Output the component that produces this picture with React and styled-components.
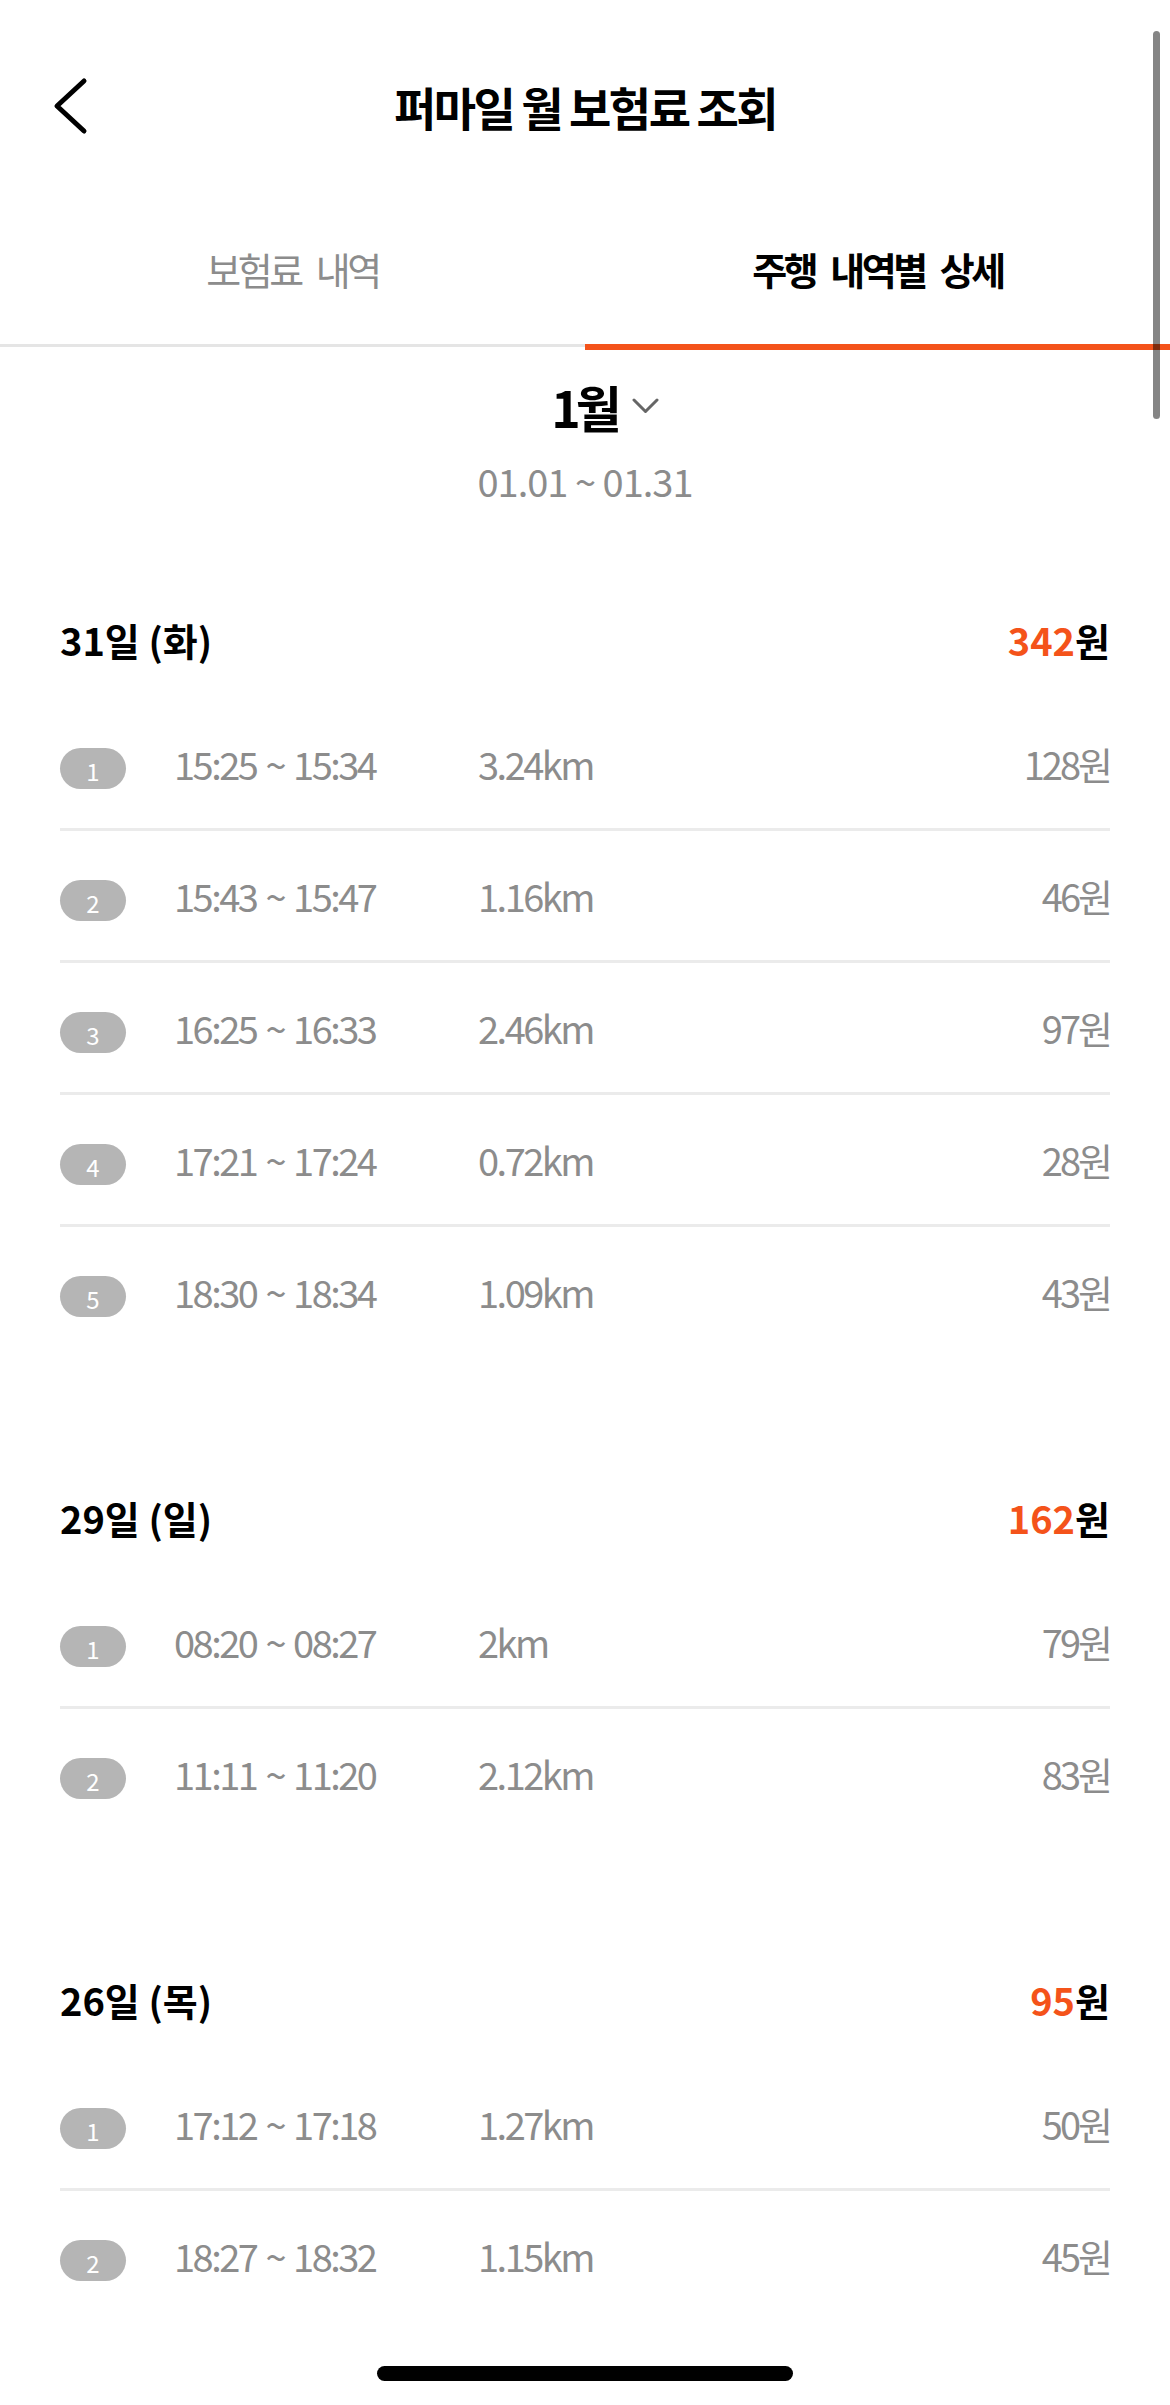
import React from "react";
import styled, { createGlobalStyle } from "styled-components";

const GlobalStyle = createGlobalStyle`
  body {
    margin: 0;
    background: #ffffff;
    font-family: "Noto Sans CJK KR", "Noto Sans", sans-serif;
  }
`;

const ORANGE = "#f4531a";
const GRAY = "#8c8c8c";

const Page = styled.div`
  position: relative;
  width: 1170px;
  min-height: 2405px;
  padding-top: 40px;
  box-sizing: border-box;
  background: #fff;
  overflow: hidden;
`;

const NavBar = styled.header`
  display: grid;
  grid-template-columns: 1fr auto 1fr;
  align-items: center;
  height: 132px;
`;

const BackButton = styled.button`
  justify-self: start;
  display: flex;
  align-items: center;
  margin-left: 52px;
  padding: 0;
  border: none;
  background: none;
  cursor: pointer;
`;

const Title = styled.h1`
  margin: 0;
  font-size: 46px;
  font-weight: 700;
  letter-spacing: -2.5px;
  color: #000;
`;

const Tabs = styled.nav`
  display: flex;
  align-items: flex-start;
`;

const Tab = styled.div`
  flex: 1;
  display: flex;
  align-items: center;
  justify-content: center;
  height: 152px;
  padding-top: 20px;
  font-size: 38px;
  letter-spacing: -3.5px;
  word-spacing: 10px;
  font-weight: ${(p) => (p.$active ? 700 : 400)};
  color: ${(p) => (p.$active ? "#000" : GRAY)};
  border-bottom: ${(p) => (p.$active ? `6px solid ${ORANGE}` : "3px solid #e5e5e5")};
`;

const MonthPicker = styled.section`
  display: flex;
  flex-direction: column;
  align-items: center;
`;

const MonthRow = styled.div`
  display: flex;
  align-items: center;
  gap: 15px;
  margin-top: 26px;
  height: 60px;
  padding-left: 40px;
`;

const Month = styled.span`
  font-size: 50px;
  font-weight: 700;
  letter-spacing: -5px;
  line-height: 60px;
  color: #000;
`;

const Range = styled.div`
  margin-top: 22px;
  font-size: 38px;
  letter-spacing: -1px;
  line-height: 46px;
  color: ${GRAY};
`;

const DaySection = styled.section`
  padding: 0 60px;
  margin-top: ${(p) => (p.$first ? 75 : 98)}px;
`;

const DayHeader = styled.div`
  display: flex;
  align-items: center;
  justify-content: space-between;
  height: 120px;
  font-size: 38px;
  font-weight: 700;
  color: #000;
`;

const Total = styled.span`
  em {
    font-style: normal;
    color: ${ORANGE};
  }
`;

const Trip = styled.div`
  display: flex;
  align-items: center;
  height: 129px;
  border-bottom: 3px solid ${(p) => (p.$last ? "transparent" : "#ebebeb")};
  font-size: 38px;
  letter-spacing: -2.5px;
  word-spacing: 3px;
  color: ${GRAY};
`;

const Badge = styled.span`
  display: flex;
  align-items: center;
  justify-content: center;
  width: 66px;
  height: 41px;
  padding-top: 4px;
  box-sizing: border-box;
  margin-top: 10px;
  margin-right: 48px;
  border-radius: 21px;
  background: #b5b5b5;
  color: #fff;
  font-size: 24px;
  letter-spacing: 0;
`;

const Time = styled.span`
  width: 304px;
`;

const Distance = styled.span`
  flex: 1;
`;

const Fee = styled.span`
  letter-spacing: -3px;
`;

const ScrollThumb = styled.div`
  position: absolute;
  top: 31px;
  right: 10px;
  width: 7px;
  height: 388px;
  border-radius: 4px;
  background: rgba(0, 0, 0, 0.48);
`;

const HomeIndicator = styled.div`
  position: absolute;
  bottom: 24px;
  left: 50%;
  width: 416px;
  height: 15px;
  margin-left: -208px;
  border-radius: 8px;
  background: #000;
`;

const days = [
  {
    label: "31일 (화)",
    total: 342,
    trips: [
      ["15:25 ~ 15:34", "3.24km", 128],
      ["15:43 ~ 15:47", "1.16km", 46],
      ["16:25 ~ 16:33", "2.46km", 97],
      ["17:21 ~ 17:24", "0.72km", 28],
      ["18:30 ~ 18:34", "1.09km", 43],
    ],
  },
  {
    label: "29일 (일)",
    total: 162,
    trips: [
      ["08:20 ~ 08:27", "2km", 79],
      ["11:11 ~ 11:20", "2.12km", 83],
    ],
  },
  {
    label: "26일 (목)",
    total: 95,
    trips: [
      ["17:12 ~ 17:18", "1.27km", 50],
      ["18:27 ~ 18:32", "1.15km", 45],
    ],
  },
];

const App = () => {
  return (
    <Page>
      <GlobalStyle />
      <NavBar>
        <BackButton aria-label="뒤로">
          <svg width="38" height="60" viewBox="0 0 38 60" fill="none">
            <path
              d="M32 5 L5 30 L32 55"
              stroke="#000"
              strokeWidth="5"
              strokeLinecap="round"
              strokeLinejoin="round"
            />
          </svg>
        </BackButton>
        <Title>퍼마일 월 보험료 조회</Title>
      </NavBar>

      <Tabs>
        <Tab>보험료 내역</Tab>
        <Tab $active>주행 내역별 상세</Tab>
      </Tabs>

      <MonthPicker>
        <MonthRow>
          <Month>1월</Month>
          <svg width="27" height="16" viewBox="0 0 27 16" fill="none">
            <path
              d="M2 2 L13.5 13.5 L25 2"
              stroke="#666"
              strokeWidth="3"
              strokeLinecap="round"
              strokeLinejoin="round"
            />
          </svg>
        </MonthRow>
        <Range>01.01 ~ 01.31</Range>
      </MonthPicker>

      {days.map((day, i) => (
        <DaySection key={day.label} $first={i === 0}>
          <DayHeader>
            <span>{day.label}</span>
            <Total>
              <em>{day.total}</em>원
            </Total>
          </DayHeader>
          {day.trips.map(([time, dist, fee], j) => (
            <Trip key={time} $last={j === day.trips.length - 1}>
              <Badge>{j + 1}</Badge>
              <Time>{time}</Time>
              <Distance>{dist}</Distance>
              <Fee>{fee}원</Fee>
            </Trip>
          ))}
        </DaySection>
      ))}

      <ScrollThumb />
      <HomeIndicator />
    </Page>
  );
};

export default App;
